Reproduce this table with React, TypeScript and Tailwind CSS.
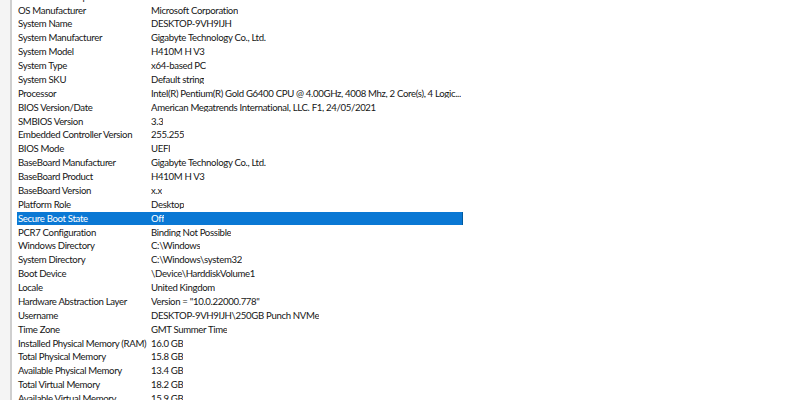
import React from "react";

const rows: [string, string][] = [
  ["Other OS Description", "Not Available"],
  ["OS Manufacturer", "Microsoft Corporation"],
  ["System Name", "DESKTOP-9VH9IJH"],
  ["System Manufacturer", "Gigabyte Technology Co., Ltd."],
  ["System Model", "H410M H V3"],
  ["System Type", "x64-based PC"],
  ["System SKU", "Default string"],
  ["Processor", "Intel(R) Pentium(R) Gold G6400 CPU @ 4.00GHz, 4008 Mhz, 2 Core(s), 4 Logic..."],
  ["BIOS Version/Date", "American Megatrends International, LLC. F1, 24/05/2021"],
  ["SMBIOS Version", "3.3"],
  ["Embedded Controller Version", "255.255"],
  ["BIOS Mode", "UEFI"],
  ["BaseBoard Manufacturer", "Gigabyte Technology Co., Ltd."],
  ["BaseBoard Product", "H410M H V3"],
  ["BaseBoard Version", "x.x"],
  ["Platform Role", "Desktop"],
  ["Secure Boot State", "Off"],
  ["PCR7 Configuration", "Binding Not Possible"],
  ["Windows Directory", "C:\\Windows"],
  ["System Directory", "C:\\Windows\\system32"],
  ["Boot Device", "\\Device\\HarddiskVolume1"],
  ["Locale", "United Kingdom"],
  ["Hardware Abstraction Layer", "Version = \"10.0.22000.778\""],
  ["Username", "DESKTOP-9VH9IJH\\250GB Punch NVMe"],
  ["Time Zone", "GMT Summer Time"],
  ["Installed Physical Memory (RAM)", "16.0 GB"],
  ["Total Physical Memory", "15.8 GB"],
  ["Available Physical Memory", "13.4 GB"],
  ["Total Virtual Memory", "18.2 GB"],
  ["Available Virtual Memory", "15.9 GB"],
];

export default function App() {
  return (
    <div className="w-[800px] h-[400px] overflow-hidden bg-white flex" style={{ fontFamily: 'Lato, "Noto Sans", sans-serif' }}>
      <div className="w-[10px] bg-[#f4f4f4]" />
      <div className="w-[2px] bg-[#cfcfcf]" />
      <div className="flex-1 flex flex-col pl-[5px] mt-[-10.5px]">
        {rows.map(([k, v]) => {
          const sel = k === "Secure Boot State";
          return (
            <div
              key={k}
              className={`flex h-[13.88px] shrink-0 items-center w-[446px] text-[9.6px] tracking-[-0.33px] leading-none whitespace-nowrap ${
                sel ? "bg-[#0a78d4] text-white border-r border-[#005a9e]" : "text-[#161616]"
              }`}
            >
              <div className="w-[134px] shrink-0 pl-[1px]">{k}</div>
              <div className="overflow-hidden">{v}</div>
            </div>
          );
        })}
      </div>
    </div>
  );
}
